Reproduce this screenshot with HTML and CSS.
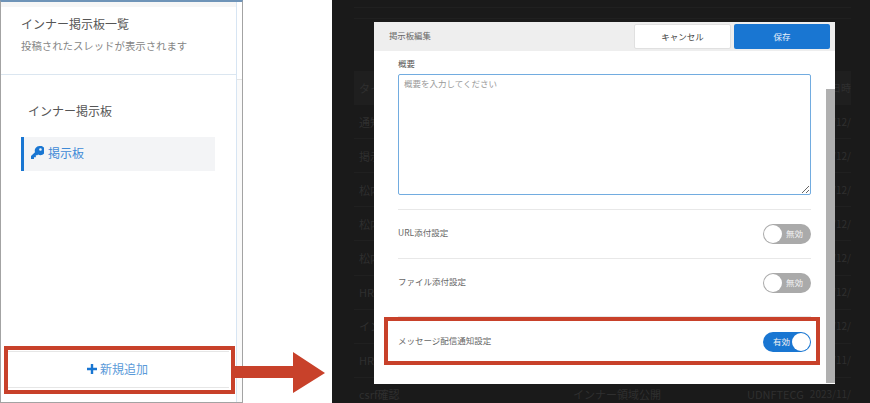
FILE: index.html
```html
<!DOCTYPE html>
<html lang="ja">
<head>
<meta charset="utf-8">
<title>インナー掲示板</title>
<link rel="stylesheet" href="styles.css">
</head>
<body>
<main class="canvas">
  <section class="left">
    <header class="left-head">
      <h1>インナー掲示板一覧</h1>
      <p>投稿されたスレッドが表示されます</p>
    </header>
    <div class="left-body">
      <h2>インナー掲示板</h2>
      <div class="nav-item">
        <svg class="key" viewBox="0 0 14 14" width="13" height="13"><path fill="#1976d2" fill-rule="evenodd" d="M9 0A5 5 0 0 0 4.3 6.6L0 10.9V14H3.2V12H5.2V10H6.8L7.6 9.2A5 5 0 1 0 9 0ZM10.2 2.4a1.4 1.4 0 1 1 0 2.8 1.4 1.4 0 0 1 0-2.8Z"/></svg>
        <span>掲示板</span>
      </div>
    </div>
    <div class="add-row">
      <button class="add-btn"><svg viewBox="0 0 10 10" width="10" height="10"><path fill="#1976d2" d="M3.8 0H6.2V3.8H10V6.2H6.2V10H3.8V6.2H0V3.8H3.8Z"/></svg><span>新規追加</span></button>
    </div>
  </section>

  <section class="dark">
    <div class="bg-table">
      <div class="bg-row bg-top"></div>
      <div class="bg-row bg-gap"></div>
      <div class="bg-row bg-head"><span>タイトル</span><span class="bg-date">更新日時</span></div>
      <div class="bg-row"><span>通知確認</span><span class="bg-date">2023/12/</span></div>
      <div class="bg-row"><span>掲示板</span><span class="bg-date">2023/12/</span></div>
      <div class="bg-row"><span>松内確認</span><span class="bg-date">2023/12/</span></div>
      <div class="bg-row"><span>松内確認</span><span class="bg-date">2023/12/</span></div>
      <div class="bg-row"><span>松内確認</span><span class="bg-date">2023/12/</span></div>
      <div class="bg-row"><span>HR確認</span><span class="bg-date">2023/12/</span></div>
      <div class="bg-row"><span>インナー</span><span class="bg-date">2023/12/</span></div>
      <div class="bg-row"><span>HR確認</span><span class="bg-date">2023/11/</span></div>
      <div class="bg-row bg-last"><span>csrf確認</span><span class="bg-mid">インナー領域公開</span><span class="bg-code">UDNFTECG</span><span class="bg-date">2023/11/</span></div>
    </div>

    <div class="modal">
      <div class="modal-head">
        <span class="modal-title">掲示板編集</span>
        <button class="btn btn-cancel">キャンセル</button>
        <button class="btn btn-save">保存</button>
      </div>
      <div class="modal-body">
        <label class="field-label">概要</label>
        <textarea class="summary" placeholder="概要を入力してください"></textarea>
        <div class="setting s-url">
          <span class="setting-name">URL添付設定</span>
          <span class="toggle off"><i class="knob"></i><b>無効</b></span>
        </div>
        <div class="setting s-file">
          <span class="setting-name">ファイル添付設定</span>
          <span class="toggle off"><i class="knob"></i><b>無効</b></span>
        </div>
        <div class="setting s-msg">
          <span class="setting-name">メッセージ配信通知設定</span>
          <span class="toggle on"><b>有効</b><i class="knob"></i></span>
        </div>
      </div>
      <div class="scrollbar"></div>
    </div>
  </section>

  <div class="mark mark-left"></div>
  <div class="mark mark-right"></div>
  <svg class="arrow" viewBox="0 0 90 41" width="90" height="41"><path fill="#c8412a" d="M0 14H58V0L90 21 58 41V26H0Z"/></svg>
</main>
</body>
</html>
```
FILE: styles.css
```css
* { box-sizing: border-box; }
html, body { margin: 0; padding: 0; background: #fff; }
body { width: 870px; height: 403px; overflow: hidden; font-family: "Noto Sans CJK JP", "Liberation Sans", sans-serif; }
.canvas { position: relative; width: 870px; height: 403px; display: flex; justify-content: space-between; background: #fff; }

.left { width: 243px; height: 403px; display: flex; flex-direction: column; border: 1px solid #a3a3a3; border-top: 2px solid #6f94b8; background: #fff; position: relative; }
.left::before { content: ""; position: absolute; top: 77px; bottom: 0; right: 0; width: 5px; background: #fafafa; border-top: 1px solid #e4e4e4; }
.left::after { content: ""; position: absolute; top: 0; bottom: 0; right: 5px; width: 1px; background: #d7e5f3; }
.left-head { height: 73px; padding: 14px 20px 0; border-bottom: 1px solid #dbe6f0; margin-right: 5px; background: linear-gradient(#f6f6f6 5px, #fff 5px); }
.left-head h1 { margin: 0; font-size: 12px; font-weight: 400; line-height: 15px; color: #555; }
.left-head p { margin: 7px 0 0; font-size: 10.4px; line-height: 15px; color: #858585; }
.left-body { flex: 1; padding: 28px 0 0 20px; }
.left-body h2 { margin: 0 0 18px 7px; font-size: 12px; font-weight: 400; line-height: 16px; color: #555; }
.nav-item { width: 194px; height: 34px; display: flex; align-items: center; gap: 4px; padding-left: 7px; padding-bottom: 3px; background: #f3f4f6; border-left: 3px solid #1976d2; color: #3f8ad6; font-size: 12px; }
.add-row { height: 56px; padding: 5px 13px 14px 5px; }
.add-btn { width: 100%; height: 100%; padding: 0 0 2px; display: flex; align-items: center; justify-content: center; gap: 3px; background: #fff; border: 0; border-top: 1px solid #e6e6e6; border-bottom: 1px solid #e6e6e6; color: #5a9ad9; font: 12px "Noto Sans CJK JP", sans-serif; }

.dark { position: relative; width: 538px; height: 403px; background: #1a1a1a; overflow: hidden; }
.bg-table { padding: 7px 19px 0 22px; font-size: 11px; line-height: 12px; color: #2f2f2f; }
.bg-row { height: 34.1px; display: flex; align-items: center; justify-content: space-between; border-bottom: 1px solid #202020; padding: 0 0 0 5px; white-space: nowrap; position: relative; }
.bg-top { height: 12px; border-top: 1px solid #202020; }
.bg-gap { height: 52px; border: 0; }
.bg-head { background: #1f1f1f; border: 0; }
.bg-date { font-size: 10px; }
.bg-last { border: 0; padding-bottom: 1px; }
.bg-mid { position: absolute; left: 219px; }
.bg-code { position: absolute; left: 393px; }

.modal { position: absolute; left: 42px; top: 22px; width: 461px; height: 362px; background: #fff; overflow: hidden; }
.modal-head { height: 29px; background: #eee; display: flex; align-items: center; padding: 0 5px 0 15px; gap: 3px; }
.modal-title { flex: 1; font-size: 8.4px; color: #666; padding-bottom: 3px; }
.btn { height: 25px; border-radius: 2px; padding: 0 0 2px; font: 8.5px "Noto Sans CJK JP", sans-serif; }
.btn-cancel { width: 97px; background: #fff; border: 1px solid #e0e0e0; color: #444; }
.btn-save { width: 96px; background: #1976d2; border: 0; color: #e6f0fa; }
.modal-body { width: 437px; padding: 6px 0 0 24px; display: flex; flex-direction: column; }
.field-label { font-size: 8.5px; line-height: 12px; height: 17px; color: #555; }
.summary { display: block; width: 413px; height: 121px; flex: none; margin: 0; padding: 2px 5px; border: 1px solid #72ace0; border-radius: 2px; font: 8.5px/12px "Noto Sans CJK JP", sans-serif; outline: 0; background: #fff; }
.summary::placeholder { color: #999; opacity: 1; }
.setting { display: flex; align-items: center; justify-content: space-between; width: 413px; flex: none; border-top: 1px solid #e8e8e8; font-size: 8.5px; color: #666; }
.setting-name { padding-bottom: 4px; }
.s-url { height: 49px; margin-top: 14px; }
.s-file { height: 58px; padding-bottom: 10px; }
.s-msg { height: 50px; }
.toggle { width: 48px; height: 20px; border-radius: 10px; display: flex; align-items: center; justify-content: space-between; padding: 1px; font-size: 8.5px; flex: none; }
.toggle b { font-weight: 400; color: #f2f2f2; padding-bottom: 2px; }
.toggle.off { background: #aaa; padding-right: 8px; }
.toggle.on { background: #1976d2; padding-left: 10px; }
.knob { width: 18px; height: 18px; border-radius: 50%; background: #fff; display: block; }
.scrollbar { position: absolute; right: 0; top: 67px; bottom: 1px; width: 9px; background: #b0b0b0; }

.mark { position: absolute; border: 4px solid #c8412a; pointer-events: none; }
.mark-left { left: 4px; top: 346px; width: 231px; height: 48px; }
.mark-right { left: 384px; top: 317px; width: 436px; height: 48px; }
.arrow { position: absolute; left: 235px; top: 352px; }
```
